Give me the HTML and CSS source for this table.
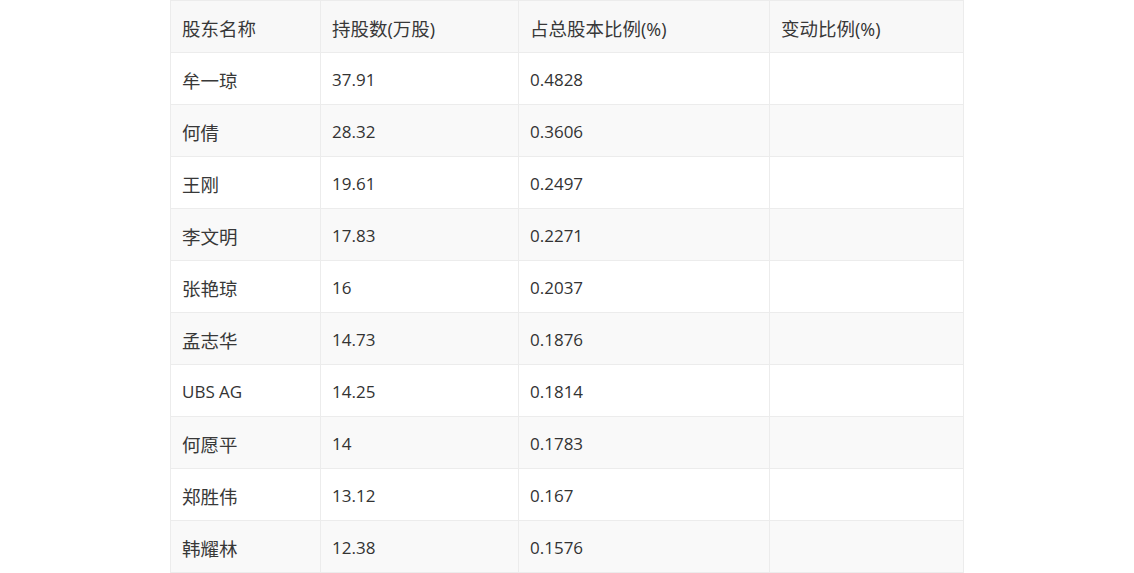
FILE: index.html
```html
<!DOCTYPE html>
<html lang="zh">
<head>
<meta charset="utf-8">
<link rel="stylesheet" href="styles.css">
</head>
<body>
<table class="holders">
  <thead>
    <tr><th class="c1"><span class="zh">股东名称</span></th><th class="c2"><span class="zh">持股数</span>(<span class="zh">万股</span>)</th><th class="c3"><span class="zh">占总股本比例</span>(%)</th><th class="c4"><span class="zh">变动比例</span>(%)</th></tr>
  </thead>
  <tbody>
    <tr><td><span class="zh">牟一琼</span></td><td>37.91</td><td>0.4828</td><td></td></tr>
    <tr><td><span class="zh">何倩</span></td><td>28.32</td><td>0.3606</td><td></td></tr>
    <tr><td><span class="zh">王刚</span></td><td>19.61</td><td>0.2497</td><td></td></tr>
    <tr><td><span class="zh">李文明</span></td><td>17.83</td><td>0.2271</td><td></td></tr>
    <tr><td><span class="zh">张艳琼</span></td><td>16</td><td>0.2037</td><td></td></tr>
    <tr><td><span class="zh">孟志华</span></td><td>14.73</td><td>0.1876</td><td></td></tr>
    <tr><td>UBS AG</td><td>14.25</td><td>0.1814</td><td></td></tr>
    <tr><td><span class="zh">何愿平</span></td><td>14</td><td>0.1783</td><td></td></tr>
    <tr><td><span class="zh">郑胜伟</span></td><td>13.12</td><td>0.167</td><td></td></tr>
    <tr><td><span class="zh">韩耀林</span></td><td>12.38</td><td>0.1576</td><td></td></tr>
  </tbody>
</table>
</body>
</html>
```
FILE: styles.css
```css
html, body {
  margin: 0;
  padding: 0;
  background: #ffffff;
}
body {
  font-family: "Open Sans", "Noto Sans CJK SC", sans-serif;
  color: #333333;
}
.holders {
  border-collapse: collapse;
  margin: 0 auto;
  width: 793px;
  table-layout: fixed;
  font-size: 17px;
}
.holders th,
.holders td {
  border: 1px solid #ececec;
  height: 52px;
  padding: 2px 11px 0;
  text-align: left;
  font-weight: normal;
  vertical-align: middle;
  box-sizing: border-box;
  white-space: nowrap;
}
.holders th {
  font-size: 18px;
}
.zh {
  font-family: "Noto Sans CJK SC", sans-serif;
  font-size: 18.5px;
  color: #383838;
}
.holders thead tr {
  background: #f8f8f8;
}
.holders tbody tr:nth-child(even) {
  background: #f9f9f9;
}
.c1 { width: 150px; }
.c2 { width: 198px; }
.c3 { width: 251px; }
.c4 { width: 194px; }
```
